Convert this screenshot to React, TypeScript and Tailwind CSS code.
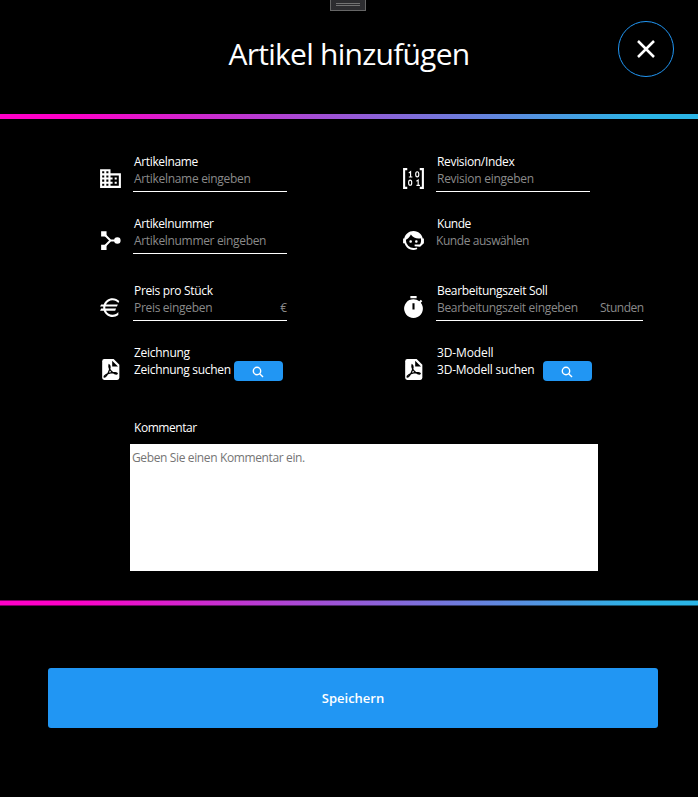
import type { ReactNode } from "react";

const font = "font-['Segoe_UI','Open_Sans','Noto_Sans',sans-serif]";

function Svg({ children, className = "h-[25px] w-[25px]" }: { children: ReactNode; className?: string }) {
  return (
    <svg viewBox="0 0 24 24" className={`block shrink-0 fill-white ${className}`}>
      {children}
    </svg>
  );
}

const BuildingIcon = () => (
  <Svg>
    <path d="M12 7V3H2v18h20V7H12zM6 19H4v-2h2v2zm0-4H4v-2h2v2zm0-4H4V9h2v2zm0-4H4V5h2v2zm4 12H8v-2h2v2zm0-4H8v-2h2v2zm0-4H8V9h2v2zm0-4H8V5h2v2zm10 12h-8v-2h2v-2h-2v-2h2v-2h-2V9h8v10zm-2-8h-2v2h2v-2zm0 4h-2v2h2v-2z" />
  </Svg>
);

const ForkIcon = () => (
  <Svg>
    <path d="M3 3h5.200v5.200H3zM3 16h5.200v5.200H3z" />
    <path d="M6 6l6 6-6 6M12 12h6" fill="none" stroke="white" strokeWidth="1.900" />
    <circle cx="18.600" cy="12" r="3.100" />
  </Svg>
);

const BinaryIcon = () => (
  <Svg>
    <path d="M2 2h4v2H4v16h2v2H2zM22 2h-4v2h2v16h-2v2h4z" />
    <g fill="none" stroke="white" strokeWidth="1.100">
      <path d="M7.500 6.700L9.200 5.500V10.500M7.500 10.600h3.400M14.800 14.700l1.700-1.200v5M14.800 18.600h3.400" />
      <ellipse cx="15.600" cy="8" rx="1.500" ry="2.500" />
      <ellipse cx="8.800" cy="16" rx="1.500" ry="2.500" />
    </g>
  </Svg>
);

const AgentIcon = () => (
  <Svg>
    <path d="M18.720 14.760C19.070 13.910 19.260 13 19.260 12C19.260 11.280 19.150 10.590 18.960 9.950C18.310 10.100 17.630 10.180 16.920 10.180C13.860 10.180 11.150 8.670 9.500 6.340C8.610 8.500 6.910 10.260 4.770 11.220C4.730 11.470 4.730 11.740 4.730 12A7.270 7.270 0 0 0 12 19.270C13.050 19.270 14.060 19.040 14.970 18.630C15.540 19.720 15.800 20.260 15.780 20.260C14.140 20.810 12.870 21.080 12 21.080C9.580 21.080 7.270 20.130 5.570 18.420C4.530 17.380 3.760 16.110 3.330 14.730H2V10.180H3.090C3.930 6.040 7.600 2.920 12 2.920C14.400 2.920 16.710 3.870 18.420 5.580C19.690 6.840 20.540 8.450 20.890 10.180H22V14.730H21.940L18.380 18L13.080 17.400V15.730H17.910L18.720 14.760M9.270 11.770A1.140 1.140 0 1 1 9.270 14.040A1.140 1.140 0 1 1 9.270 11.770M14.720 11.770A1.140 1.140 0 1 1 14.720 14.040A1.140 1.140 0 1 1 14.720 11.770Z" />
  </Svg>
);

const EuroIcon = () => (
  <Svg>
    <path d="M7.070 11L7 12L7.070 13H17.350L16.500 15H7.670C8.800 17.360 11.210 19 14 19C16.230 19 18.220 17.960 19.500 16.330V19.120C18 20.300 16.070 21 14 21C10.080 21 6.750 18.500 5.500 15H2L3 13H5.050L5 12L5.050 11H2L3 9H5.500C6.750 5.500 10.080 3 14 3C16.500 3 18.800 4.040 20.430 5.710L19.570 7.750C18.290 6.080 16.270 5 14 5C11.210 5 8.800 6.640 7.670 9H19.040L18.190 11H7.070Z" />
  </Svg>
);

const TimerIcon = () => (
  <Svg>
    <path d="M15 1H9v2h6V1zM19.030 7.390l1.420-1.420c-.430-.510-.900-.990-1.410-1.410l-1.420 1.420A8.960 8.960 0 0 0 12 4a9 9 0 1 0 7.030 3.390zM13 14h-2V8h2v6z" />
  </Svg>
);

const PdfIcon = () => (
  <Svg>
    <path d="M6 2h9l5.500 5.500V20a2 2 0 0 1-2 2H6a2 2 0 0 1-2-2V4a2 2 0 0 1 2-2z" />
    <path d="M13.600 3.500V9h5.600z" fill="black" />
    <path
      d="M10.600 7.500C12.200 8.600 11.600 11.600 10 14.800C8.700 17.300 7 19.400 5.800 19.200C5.400 17.800 8.600 16.100 12.200 15.300C15.500 14.600 18.400 14.900 18.500 15.900C17.600 17.100 14.500 15.700 12.700 13.600C11 11.600 10.100 9.200 10.600 7.500Z"
      fill="none"
      stroke="black"
      strokeWidth="1.200"
    />
  </Svg>
);

function Field({
  icon, label, labelClass, hint, hintClass, suffix, width, line = true,
}: {
  icon: ReactNode; label: string; labelClass: string; hint: string; hintClass: string;
  suffix?: ReactNode; width: string; line?: boolean;
}) {
  return (
    <div className="flex h-[38px] items-start">
      <div className="mt-3 w-[35px] shrink-0">{icon}</div>
      <div className={`h-[38px] shrink-0 whitespace-nowrap text-xs leading-4 ${width} ${line ? "border-b border-white" : ""}`}>
        <div className={`pl-px text-white ${labelClass}`}>{label}</div>
        <div className="mt-px flex justify-between text-[#8a8a8a]">
          <span className={`${line ? "pl-px" : ""} ${hintClass}`}>{hint}</span>
          {suffix}
        </div>
      </div>
    </div>
  );
}

function FileField({ label, hint, labelClass, hintClass, hintWidth }: {
  label: string; hint: string; labelClass: string; hintClass: string; hintWidth: string;
}) {
  return (
    <div className="flex h-[38px] items-start">
      <div className="mt-3 w-9 shrink-0"><PdfIcon /></div>
      <div className={`shrink-0 whitespace-nowrap text-xs leading-4 text-white ${hintWidth}`}>
        <div className={labelClass}>{label}</div>
        <div className={`mt-px ${hintClass}`}>{hint}</div>
      </div>
      <button className="mt-4 flex h-5 w-[49px] items-center justify-center rounded-sm bg-[#2196f3]">
        <svg viewBox="0 0 12 12" className="mr-0.5 mt-0.5 h-3 w-3" fill="none" stroke="white" strokeWidth="1.400">
          <circle cx="5" cy="5" r="3.700" />
          <path d="M7.700 7.700l3.300 3.300" />
        </svg>
      </button>
    </div>
  );
}

const Bar = ({ className }: { className: string }) => (
  <div className={`w-full bg-[linear-gradient(90deg,#ff00c8_0%,#ff00c8_10%,#2bb5e6_92%,#2bb5e6_100%)] ${className}`} />
);

export default function App() {
  return (
    <div className={`h-[797px] w-[698px] overflow-hidden bg-black ${font}`}>
      <header className="relative flex h-[114px] justify-center">
        <div className="absolute left-[330px] top-0 flex h-[11px] w-9 flex-col items-center gap-px border border-t-0 border-[#666] bg-[#2d2d30] pt-[3px]">
          <div className="h-px w-6 bg-[#737373]" />
          <div className="h-px w-6 bg-[#737373]" />
        </div>
        <h1 className="mt-[34px] whitespace-nowrap text-[30px] leading-10 tracking-[-0.75px] text-white">Artikel hinzufügen</h1>
        <button className="absolute left-[618px] top-[21px] flex h-14 w-14 items-center justify-center rounded-full border border-[#2196f3]">
          <svg viewBox="0 0 18 18" className="h-[18px] w-[18px]" fill="none" stroke="white" strokeWidth="2.500">
            <path d="M1 1l16 16M17 1L1 17" />
          </svg>
        </button>
      </header>
      <Bar className="h-[5px]" />
      <main className="h-[481px] pl-[98px] pt-[35px]">
        <div className="grid grid-cols-[303px_270px]">
          <div className="mb-6"><Field icon={<BuildingIcon />} label="Artikelname" labelClass="tracking-[-0.35px]" hint="Artikelname eingeben" hintClass="tracking-[-0.31px]" width="w-[154px]" /></div>
          <div className="mb-6"><Field icon={<BinaryIcon />} label="Revision/Index" labelClass="tracking-[-0.33px]" hint="Revision eingeben" hintClass="tracking-[-0.27px]" width="w-[154px]" /></div>
          <div className="mb-[29px]"><Field icon={<ForkIcon />} label="Artikelnummer" labelClass="tracking-[-0.38px]" hint="Artikelnummer eingeben" hintClass="tracking-[-0.33px]" width="w-[154px]" /></div>
          <div className="mb-[29px]"><Field icon={<AgentIcon />} label="Kunde" labelClass="tracking-[-0.45px]" hint="Kunde auswählen" hintClass="tracking-[-0.43px]" width="w-[154px]" line={false} /></div>
          <div className="mb-6"><Field icon={<EuroIcon />} label="Preis pro Stück" labelClass="tracking-[-0.33px]" hint="Preis eingeben" hintClass="tracking-[-0.31px]" width="w-[154px]" suffix={<span>€</span>} /></div>
          <div className="mb-6"><Field icon={<TimerIcon />} label="Bearbeitungszeit Soll" labelClass="tracking-[-0.31px]" hint="Bearbeitungszeit eingeben" hintClass="tracking-[-0.33px]" width="w-[207px]" suffix={<span className="w-[43px] tracking-[-0.48px]">Stunden</span>} /></div>
          <FileField label="Zeichnung" labelClass="tracking-[-0.28px]" hint="Zeichnung suchen" hintClass="tracking-[-0.31px]" hintWidth="w-[100px]" />
          <FileField label="3D-Modell" labelClass="tracking-[-0.12px]" hint="3D-Modell suchen" hintClass="tracking-[-0.22px]" hintWidth="w-[106px]" />
        </div>
        <div className="ml-9 mt-[37px] h-6 text-xs leading-4 tracking-[-0.45px] text-white">Kommentar</div>
        <div className="ml-8 h-[127px] w-[468px] bg-white pl-0.5 pt-1.5 text-xs leading-4 tracking-[-0.37px] text-[#757575]">Geben Sie einen Kommentar ein.</div>
      </main>
      <Bar className="h-px opacity-50" />
      <Bar className="h-1" />
      <Bar className="h-px opacity-50" />
      <button className="ml-12 mt-[62px] flex h-[60px] w-[610px] items-center justify-center rounded-[3px] bg-[#2196f3] pt-0.5 text-[13px] font-semibold text-white">
        <span>Speichern</span>
      </button>
    </div>
  );
}
